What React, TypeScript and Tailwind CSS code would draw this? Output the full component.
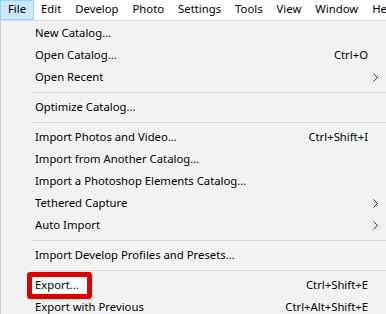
const BAR = ["File", "Edit", "Develop", "Photo", "Settings", "Tools", "View", "Window", "Help"];

type Item =
  | { sep: true }
  | { label: string; keys?: string; sub?: boolean; mark?: boolean; sep?: false };

const ITEMS: Item[] = [
  { label: "New Catalog..." },
  { label: "Open Catalog...", keys: "Ctrl+O" },
  { label: "Open Recent", sub: true },
  { sep: true },
  { label: "Optimize Catalog..." },
  { sep: true },
  { label: "Import Photos and Video...", keys: "Ctrl+Shift+I" },
  { label: "Import from Another Catalog..." },
  { label: "Import a Photoshop Elements Catalog..." },
  { label: "Tethered Capture", sub: true },
  { label: "Auto Import", sub: true },
  { sep: true },
  { label: "Import Develop Profiles and Presets..." },
  { sep: true },
  { label: "Export...", keys: "Ctrl+Shift+E", mark: true },
  { label: "Export with Previous", keys: "Ctrl+Alt+Shift+E" },
];

function Chevron() {
  return (
    <svg width="5" height="9" viewBox="0 0 5 9" className="text-[#333]">
      <polyline points="0.5,0.5 4.5,4.5 0.5,8.5" fill="none" stroke="currentColor" strokeWidth="1" />
    </svg>
  );
}

export default function App() {
  return (
    <div className="w-[386px] h-[314px] overflow-hidden bg-[#f2f2f2] text-[11.3px] text-black font-['Noto_Sans',sans-serif]">
      <div className="flex h-[21px] bg-white border-b border-[#d9d9d9] items-center whitespace-nowrap">
        {BAR.map((b, i) => (
          <div
            key={b}
            className={`h-full flex items-center px-[7px] shrink-0 ${
              i === 0 ? "bg-[#cce8ff] border border-[#99d1ff] pb-px" : "pb-[2px]"
            }`}
          >
            {b}
          </div>
        ))}
      </div>
      <div className="border-l border-[#cccccc] h-full pt-px">
        {ITEMS.map((it, i) =>
          it.sep ? (
            <div key={i} className="h-[8px] flex items-center pl-[30px]">
              <div className="h-px w-full bg-[#d7d7d7]" />
            </div>
          ) : (
            <div key={i} className="h-[22px] flex items-center pl-[34px] pr-[8px]">
              {it.mark ? (
                <span className="relative isolate">
                  <span className="absolute -left-[8px] -right-[13px] -top-[5px] -bottom-[6px] border-[5px] border-[#e00000] rounded-[3px] bg-white -z-10" />
                  {it.label}
                </span>
              ) : (
                <span>{it.label}</span>
              )}
              <span className="flex-1" />
              {it.keys && <span className="mr-[10px]">{it.keys}</span>}
              {it.sub && (
                <span className="w-[10px] flex justify-end">
                  <Chevron />
                </span>
              )}
              {!it.keys && !it.sub && <span className="w-[10px]" />}
            </div>
          )
        )}
      </div>
    </div>
  );
}
